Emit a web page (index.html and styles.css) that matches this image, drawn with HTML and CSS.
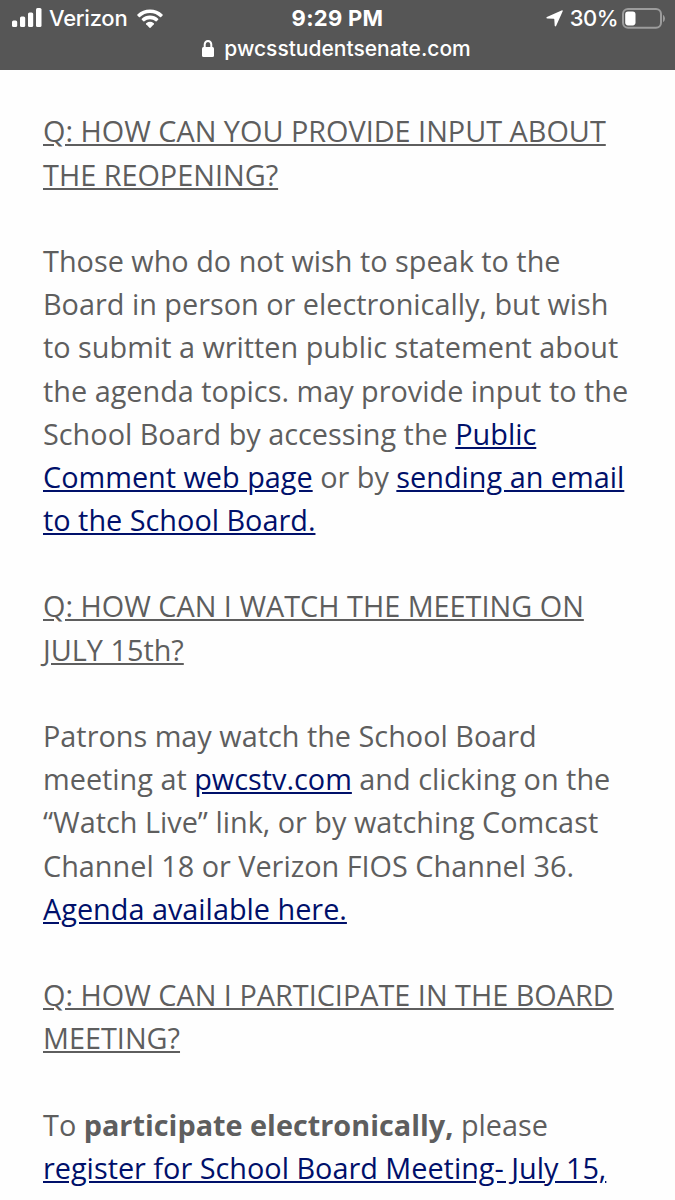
FILE: index.html
```html
<!DOCTYPE html>
<html lang="en">

<head>
    <meta charset="UTF-8">
    <meta name="viewport" content="width=device-width, initial-scale=1.0">
    <title>PWCS Student Senate</title>
    <link rel="stylesheet" href="styles.css">
</head>

<body>
    <header class="topbar">
        <div class="status">
            <div class="status-left">
                <svg class="signal" viewBox="0 0 30 20" width="30" height="20">
                    <rect x="0" y="12.500" width="5.200" height="6.500" rx="1.500" />
                    <rect x="8" y="8.500" width="5.200" height="10.500" rx="1.500" />
                    <rect x="16" y="4.500" width="5.200" height="14.500" rx="1.500" />
                    <rect x="24" y="0" width="5.500" height="19" rx="1.500" />
                </svg>
                <span class="carrier">Verizon</span>
                <svg class="wifi" viewBox="0 0 26 19" width="26" height="19">
                    <path d="M13 4C17 4 20.500 5.600 23 8.100Q23.600 8.500 24.100 8L25.600 6.500Q26 6 25.600 5.600A18 18 0 0 0 .4 5.600Q0 6 .4 6.500L1.900 8Q2.400 8.500 3 8.100C5.500 5.600 9 4 13 4Z" />
                    <path d="M13 10.200C15.200 10.200 17.100 11 18.600 12.300Q19.100 12.800 19.600 12.300L21.200 10.700Q21.600 10.200 21.200 9.800A12 12 0 0 0 4.800 9.800Q4.400 10.200 4.800 10.700L6.400 12.300Q6.900 12.800 7.400 12.300C8.900 11 10.800 10.200 13 10.200Z" />
                    <path d="M12.500 18.700Q13 19.100 13.500 18.700L16.900 15.200Q17.300 14.700 16.800 14.300A6.200 6.200 0 0 0 9.200 14.300Q8.700 14.700 9.100 15.200Z" />
                </svg>
            </div>
            <div class="time">9:29 PM</div>
            <div class="status-right">
                <svg class="arrow" viewBox="0 0 17 17" width="17" height="17">
                    <path d="M16.700 1.300L10.200 15.700Q9.300 17.200 8.700 15.700L8.300 9.300Q8.300 8.700 7.700 8.700L1.300 8.600Q-.4 8 .9 6.900L15.500 .4Q17.100 -.1 16.700 1.300Z" />
                </svg>
                <span class="percent">30%</span>
                <svg class="battery" viewBox="0 0 43 21" width="43" height="21">
                    <rect class="case" x="1" y="1" width="38" height="18.800" rx="5" />
                    <rect x="3.200" y="3.600" width="10.300" height="13.800" rx="2.800" />
                    <path class="cap" d="M41 7C43.600 8 43.600 13 41 14Z" />
                </svg>
            </div>
        </div>
        <div class="address">
            <svg class="lock" viewBox="0 0 12 17" width="12" height="17">
                <path class="shackle" d="M2.700 8V4.500A3.300 3.500 0 0 1 9.300 4.500V8" />
                <rect x="0" y="7" width="12" height="10" rx="1.500" />
            </svg>
            <span class="domain">pwcsstudentsenate.com</span>
        </div>
    </header>
    <main class="content">
        <h2>Q: HOW CAN YOU PROVIDE INPUT ABOUT<br>THE REOPENING?</h2>
        <p>Those who do not wish to speak to the<br>
            Board in person or electronically, but wish<br>
            to submit a written public statement about<br>
            the agenda topics. may provide input to the<br>
            School Board by accessing the <a href="#">Public<br>Comment web page</a> or by <a href="#">sending an email<br>to the School Board.</a></p>
        <h2>Q: HOW CAN I WATCH THE MEETING ON<br>JULY 15th?</h2>
        <p>Patrons may watch the School Board<br>
            meeting at <a href="#">pwcstv.com</a> and clicking on the<br>
            “Watch Live” link, or by watching Comcast<br>
            Channel 18 or Verizon FIOS Channel 36.<br>
            <a href="#">Agenda available here.</a></p>
        <h2>Q: HOW CAN I PARTICIPATE IN THE BOARD<br>MEETING?</h2>
        <p>To <b>participate electronically,</b> please<br>
            <a href="#">register for School Board Meeting- July 15,</a></p>
    </main>
</body>

</html>
```
FILE: styles.css
```css
* {
    margin: 0;
    padding: 0;
    box-sizing: border-box;
}

body {
    width: 675px;
    height: 1200px;
    overflow: hidden;
    background: #fefefe;
    color: #5e5e5e;
    font-family: "Open Sans", sans-serif;
}

.topbar {
    height: 70px;
    background: #565656;
    color: #fff;
    font-family: Inter, sans-serif;
    font-weight: 500;
}

.topbar svg {
    flex: none;
    fill: #fff;
}

.status {
    display: grid;
    grid-template-columns: 1fr auto 1fr;
    height: 36px;
    padding: 0 10px 0 12px;
    font-size: 22px;
    line-height: 36px;
}

.status-left,
.status-right {
    display: flex;
    align-items: center;
}

.status-right {
    justify-content: flex-end;
}

.carrier {
    margin: 0 10px 0 7px;
    letter-spacing: -0.25px;
}

.time {
    margin-right: 2px;
    font-weight: 700;
    letter-spacing: 0.3px;
}

.percent {
    margin: 0 4px 0 7px;
    letter-spacing: -0.5px;
}

.battery .case {
    fill: none;
    stroke: #9c9c9c;
    stroke-width: 2;
}

.battery .cap {
    fill: #9c9c9c;
}

.address {
    display: flex;
    justify-content: center;
    align-items: center;
    height: 24px;
    padding-right: 2px;
    font-size: 21px;
}

.lock {
    margin-right: 10px;
}

.lock .shackle {
    fill: none;
    stroke: #fff;
    stroke-width: 2;
}

.content {
    padding: 39.4px 0 0 43px;
    font-size: 28.83px;
    line-height: 43.18px;
    white-space: nowrap;
}

.content h2 {
    margin-bottom: 43.18px;
    font-size: inherit;
    font-weight: 400;
    text-decoration: underline;
}

.content p {
    margin-bottom: 43.18px;
}

.content a {
    color: #00106a;
}
```
